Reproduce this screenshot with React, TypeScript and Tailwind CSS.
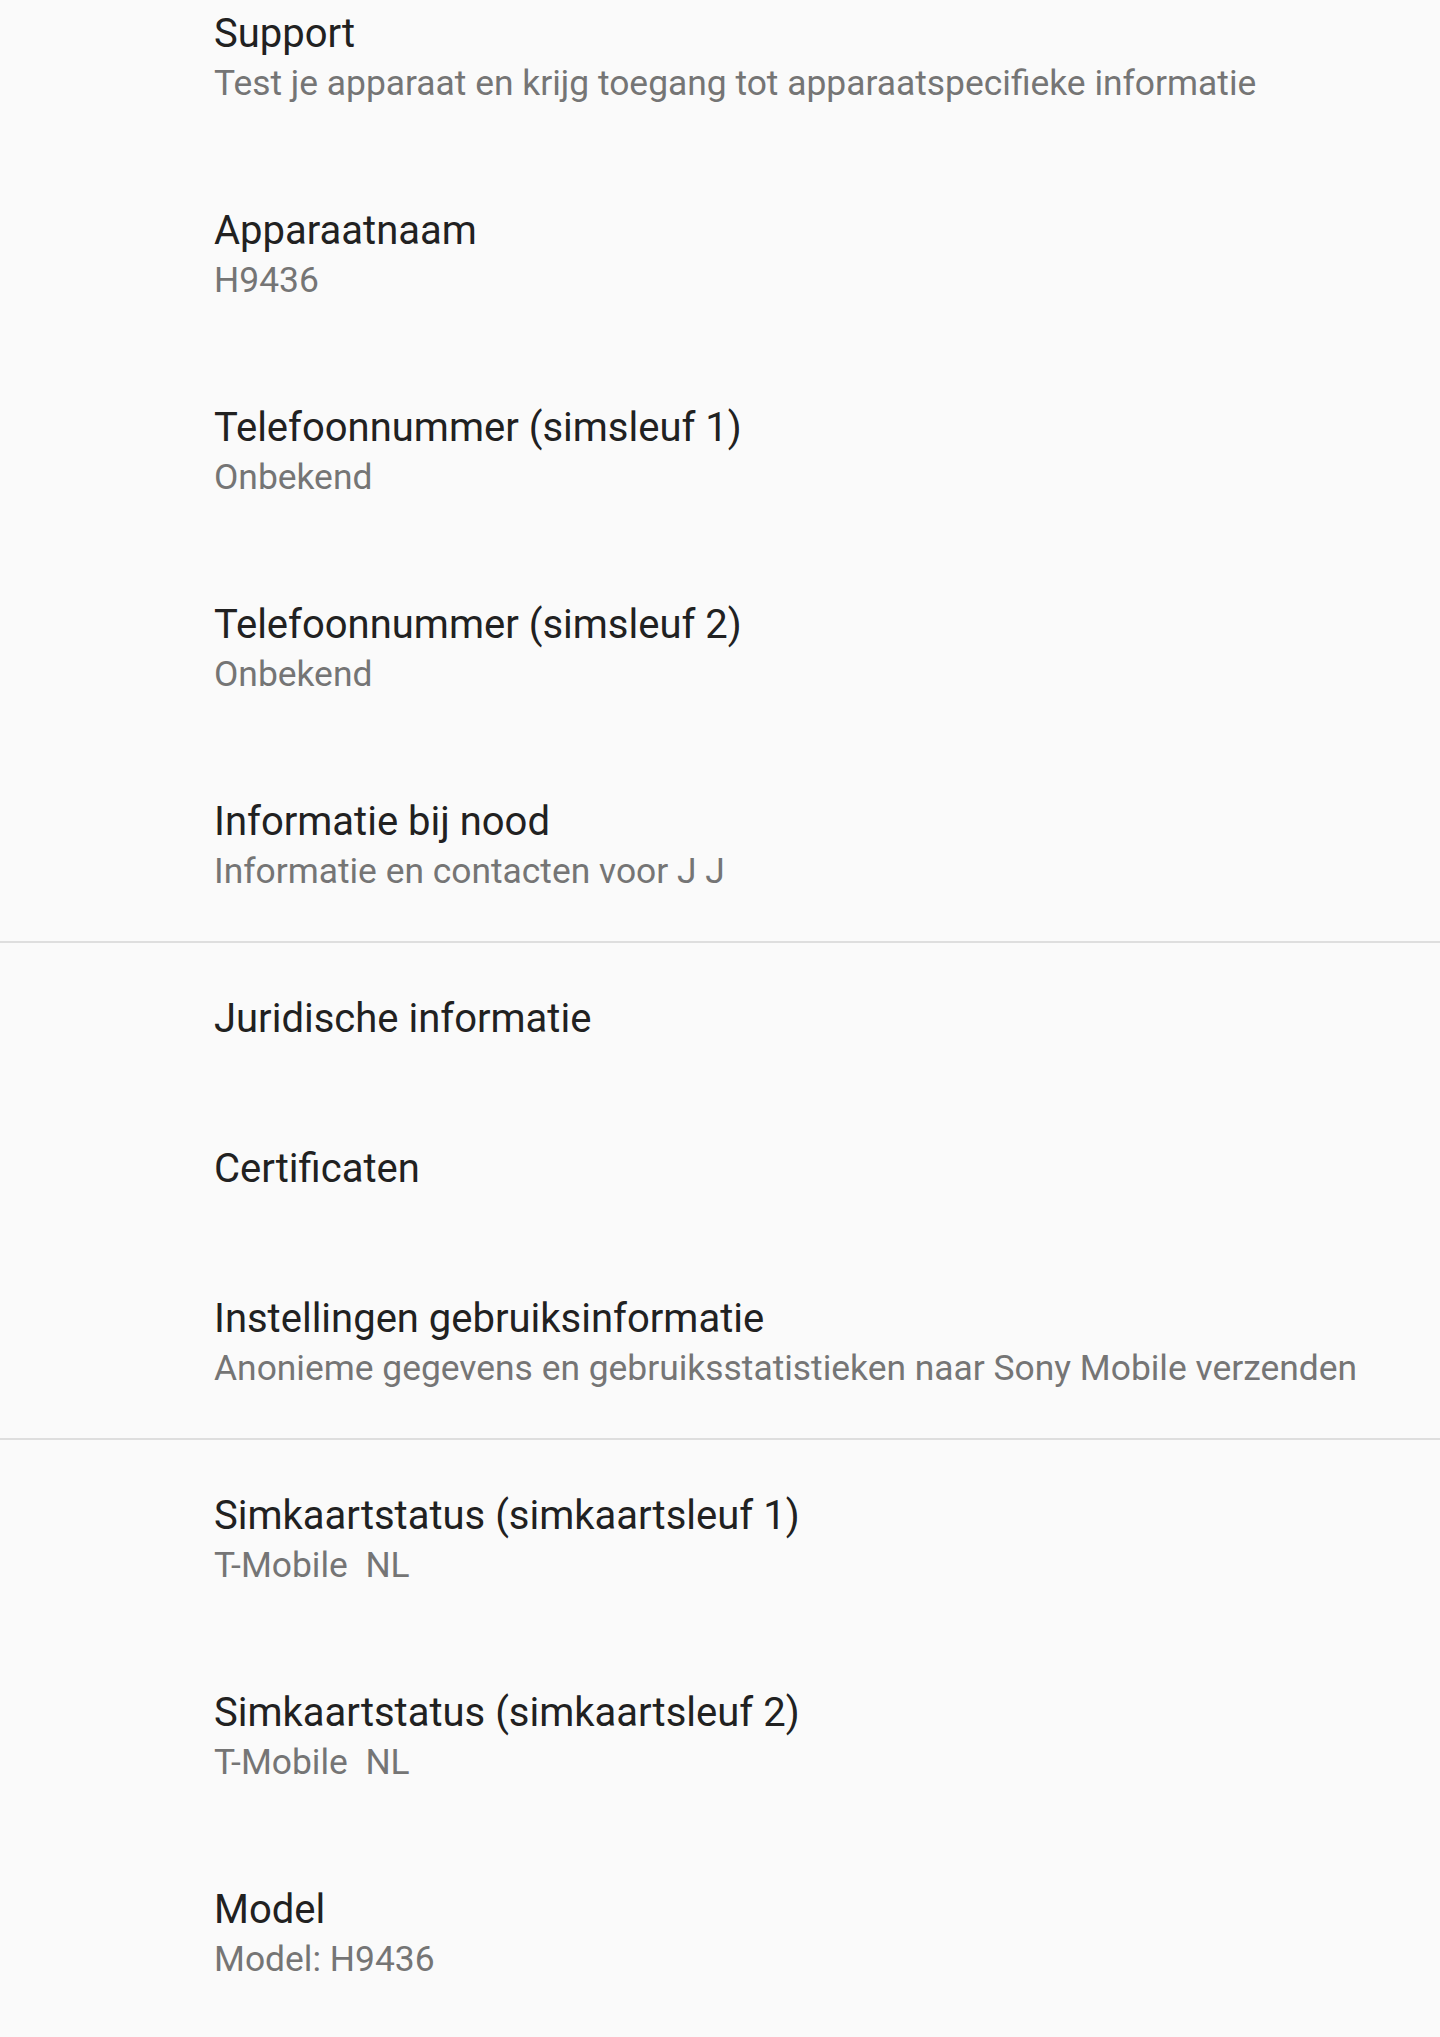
import React from "react";

type Item = { title: string; summary?: string; divider?: boolean };

const items: Item[] = [
  { title: "Support", summary: "Test je apparaat en krijg toegang tot apparaatspecifieke informatie" },
  { title: "Apparaatnaam", summary: "H9436" },
  { title: "Telefoonnummer (simsleuf 1)", summary: "Onbekend" },
  { title: "Telefoonnummer (simsleuf 2)", summary: "Onbekend" },
  { title: "Informatie bij nood", summary: "Informatie en contacten voor J J" },
  { title: "Juridische informatie", divider: true },
  { title: "Certificaten" },
  { title: "Instellingen gebruiksinformatie", summary: "Anonieme gegevens en gebruiksstatistieken naar Sony Mobile verzenden" },
  { title: "Simkaartstatus (simkaartsleuf 1)", summary: "T-Mobile\u00a0\u00a0NL", divider: true },
  { title: "Simkaartstatus (simkaartsleuf 2)", summary: "T-Mobile\u00a0\u00a0NL" },
  { title: "Model", summary: "Model: H9436" },
];

function Row({ item }: { item: Item }) {
  return (
    <div
      className={
        item.divider
          ? "mt-[1px] border-t-2 border-[#dedede] pt-[50px] pb-[45px] pl-[214px] pr-8"
          : "pt-[53px] pb-[45px] pl-[214px] pr-8"
      }
    >
      <div className="text-[40px] leading-[52px] text-[#212121]">{item.title}</div>
      {item.summary && (
        <div className="text-[35.4px] leading-[47px] text-[#757575] whitespace-pre">{item.summary}</div>
      )}
    </div>
  );
}

export default function App() {
  return (
    <div
      className="min-h-screen w-full overflow-hidden bg-[#fafafa]"
      style={{ fontFamily: "Roboto, 'Noto Sans', sans-serif" }}
    >
      <div className="-mt-[45px] flex flex-col">
        {items.map((it, i) => (
          <Row key={i} item={it} />
        ))}
      </div>
    </div>
  );
}
